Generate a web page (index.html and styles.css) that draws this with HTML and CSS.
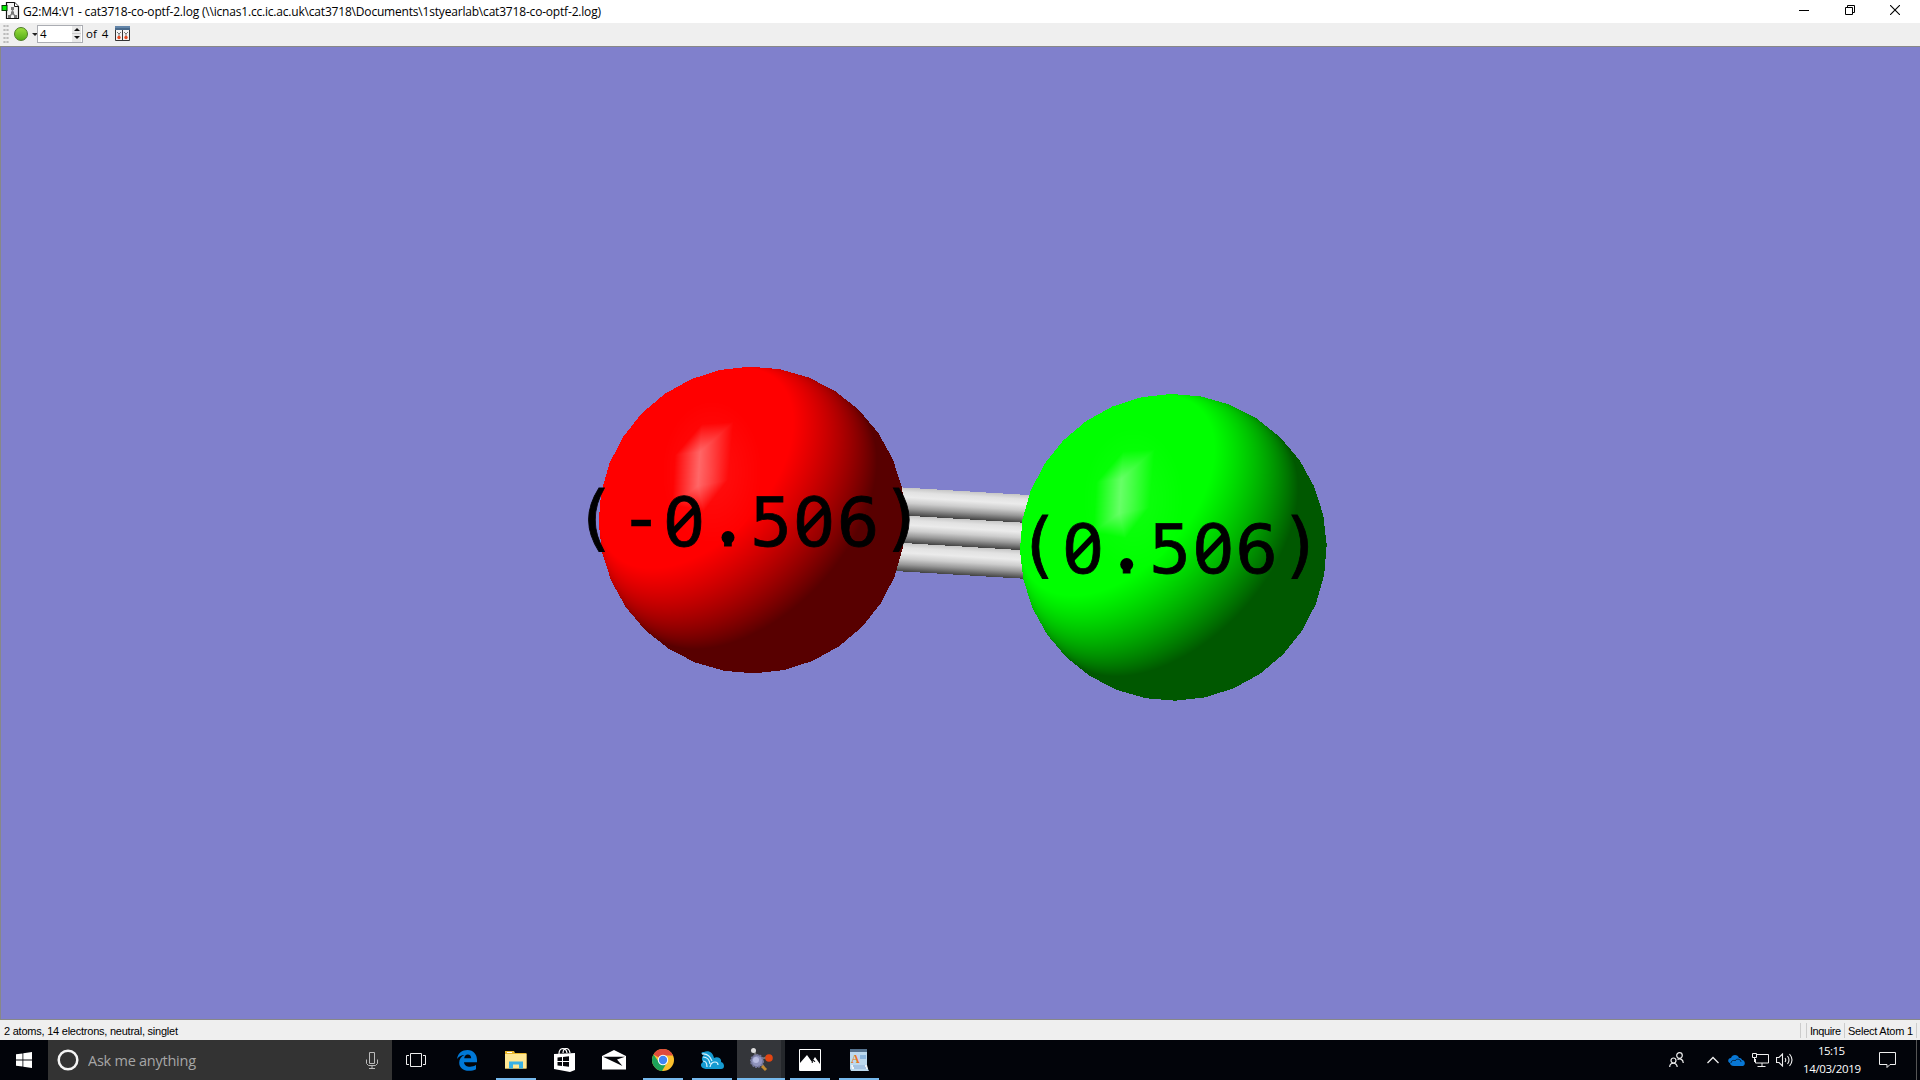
FILE: index.html
```html
<!DOCTYPE html>
<html lang="en">
<head>
<meta charset="utf-8">
<title>G2:M4:V1 - cat3718-co-optf-2.log</title>
<link rel="stylesheet" href="styles.css">
</head>
<body>
<header class="titlebar">
  <svg class="app-icon" width="20" height="20" viewBox="0 0 20 20"><path d="M5.500 1.500h8l4 4v12h-12z" fill="#f4f4f4" stroke="#111" stroke-width="1.200"/><path d="M13.500 1.500v4h4" fill="#fff" stroke="#111"/><path d="M11.500 7v5l-3 3.500m3-3.500l3 3.500" stroke="#888" stroke-width="1.500" fill="none"/><g fill="#777"><rect x="10" y="6" width="3" height="3"/><rect x="10" y="10.500" width="3" height="3"/><rect x="7" y="14" width="3" height="3"/><rect x="13" y="14" width="3" height="3"/></g><rect x="1" y="4.500" width="5" height="5" fill="#0e0" stroke="#043b04"/></svg>
  <svg class="title-text" width="600" height="23"><text x="0" y="16" textLength="578">G2:M4:V1 - cat3718-co-optf-2.log (\\icnas1.cc.ic.ac.uk\cat3718\Documents\1styearlab\cat3718-co-optf-2.log)</text></svg>
  <div class="window-buttons">
    <svg width="10" height="10"><path d="M0 5.500h10" stroke="#000"/></svg>
    <svg width="10" height="10"><path d="M.5 2.500h7v7h-7zM2.500 2V.5h7v7H8" fill="none" stroke="#000"/></svg>
    <svg width="10" height="10"><path d="M0 0l10 10M10 0L0 10" stroke="#000" stroke-width="1.100"/></svg>
  </div>
</header>
<div class="toolbar">
  <span class="grip"></span>
  <span class="ball"></span>
  <span class="drop"></span>
  <div class="spin"><span>4</span><div class="spin-buttons"><i class="up"></i><i class="down"></i></div></div>
  <span class="of">of</span><span class="total">4</span>
  <svg width="15" height="15"><path d="M.5.500h14v14H.5z" fill="#f3f3f3" stroke="#333"/><path d="M0 0h15v4H0z" fill="#49698b"/><path d="M0 1h15" stroke="#7fa3c8"/><path d="M7.500 4v11" stroke="#333"/><path d="M2 6l2 2 2-2M9 6l2 2 2-2M4 8v3m7-3v3" stroke="#777" fill="none"/><circle cx="4" cy="11.500" r="1.700" fill="#e64b22"/><circle cx="11" cy="11.500" r="1.700" fill="#e64b22"/></svg>
</div>
<main class="scene">
  <svg class="layer" width="1919" height="972" viewBox="1 47 1919 972">
    <defs><linearGradient id="bond" x1="0" y1="0" x2="0" y2="1"><stop offset="0" stop-color="#c6c6c6"/><stop offset=".16" stop-color="#e2e2e2"/><stop offset=".34" stop-color="#ebebeb"/><stop offset=".55" stop-color="#cdcdcd"/><stop offset=".75" stop-color="#999"/><stop offset="1" stop-color="#444"/></linearGradient></defs>
    <g transform="translate(890 486.700) skewY(3.450)" shape-rendering="crispEdges"><rect width="145" height="28" fill="url(#bond)"/><rect y="28" width="145" height="27.500" fill="url(#bond)"/><rect y="55.500" width="145" height="28.500" fill="url(#bond)"/></g>
  </svg>
  <canvas class="layer" id="atoms" width="1919" height="972"></canvas>
  <svg class="layer charges" width="1919" height="972" viewBox="1 47 1919 972">
    <text class="paren" x="595" y="542">(</text>
    <text class="minus" x="641" y="544">-</text>
    <text x="684 728 771 814 857.700" y="545.500">0.506</text>
    <text class="paren" x="902.500" y="542">)</text>
    <text class="paren" x="1038.500" y="569">(</text>
    <text x="1083 1126.700 1170 1213.300 1256.300" y="572.500">0.506</text>
    <text class="paren" x="1301" y="569">)</text>
    <g class="slash">
      <line x1="672" y1="533" x2="696" y2="508"/>
      <line x1="802" y1="533" x2="826" y2="508"/>
      <line x1="1071" y1="560" x2="1095" y2="535"/>
      <line x1="1201" y1="560" x2="1225" y2="535"/>
    </g>
    <g class="point"><circle cx="728" cy="537.500" r="6.500"/><circle cx="1126.700" cy="564.500" r="6.500"/></g>
  </svg>
</main>
<footer class="status">
  <svg width="190" height="20"><text x="0" y="15" textLength="174">2 atoms, 14 electrons, neutral, singlet</text></svg>
  <div class="status-cells"><span class="cell empty"></span><span class="cell"><svg width="37" height="20"><text x="3" y="15" textLength="31">Inquire</text></svg></span><span class="cell"><svg width="71" height="20"><text x="3" y="15" textLength="65">Select Atom 1</text></svg></span><span class="cell end"></span></div>
</footer>
<nav class="taskbar">
  <div class="start"><svg width="16" height="16"><path d="M0 2.300l6.500-.9v6.200H0zM7.300 1.300L16 0v7.600H7.300zM0 8.400h6.500v6.200L0 13.700zM7.300 8.400H16V16l-8.700-1.300z" fill="#fff"/></svg></div>
  <div class="search">
    <svg width="22" height="22"><circle cx="11" cy="11" r="9.300" fill="none" stroke="#f4f4f4" stroke-width="2.500"/></svg>
    <svg class="hint" width="120" height="40"><text x="0" y="25.500" textLength="108">Ask me anything</text></svg>
    <svg class="mic" width="12" height="17"><path d="M3.500.500h5v11h-5zM.5 7.500v4l2 2h7l2-2v-4M6 13.500v3M3 16.500h6" fill="none" stroke="#bbb"/></svg>
  </div>
  <div class="apps">
    <div class="app tasks"><svg width="20" height="14"><path d="M4.500.500h11v13h-11zM3 2.500H.5v9H3M17 2.500h2.500v9H17" fill="none" stroke="#eee"/></svg></div>
    <div class="app"><svg width="22" height="22"><path d="M1 10C2 4 6 1 11.500 1 17.500 1 21 5.500 21 11v2.200H8c.2 3.200 3 4.500 6 4.500 2.300 0 4.300-.7 6-1.700v4.200c-2 1.100-4.200 1.600-7 1.600C7 21.800 3.200 18.300 3.200 13.700c0-3.500 2-6.200 5.300-7.700C5.500 6.100 3 7.500 1 10zm7.200-.7h7c0-2.500-1.300-3.900-3.400-3.900-2 0-3.300 1.500-3.600 3.900z" fill="#0078d7"/></svg></div>
    <div class="app open"><svg width="22" height="18"><path d="M0 0h9l1 2h11.500v15.500H0z" fill="#e8b62c"/><path d="M0 3h21.500v14.500H0z" fill="#ffe793"/><path d="M2 1h5v1H2z" fill="#fff"/><path d="M4 10.500h14v7h-4v-4H8v4H4z" fill="#38b1e5"/></svg></div>
    <div class="app"><svg width="22" height="24"><path d="M0 6l21-1v17l-5 2L0 21z" fill="#fff"/><path d="M5 6C5-1 12-1 13 5M9 5c0-6 6-6 7 0" fill="none" stroke="#fff" stroke-width="1.200"/><path d="M3.500 9.500l4.500-.5v4H3.500zM9 8.900l6-.6V13H9zM3.500 14H8v4l-4.500-.4zM9 14h6v4.700L9 18.100z" fill="#05060a"/></svg></div>
    <div class="app"><svg width="24" height="20"><path d="M0 6L12 0l12 6v13.500H0z" fill="#fff"/><path d="M1 6.700L20.500 16 15 9.500 23 6.700z" fill="#05060a"/></svg></div>
    <div class="app open"><svg width="22" height="22" viewBox="-11 -11 22 22"><circle r="11" fill="#fbc02d"/><path d="M0 0L-9.500-5.500A11 11 0 0 1 10-4.600H0z" fill="#de4b3d"/><path d="M-9.500-5.500A11 11 0 0 0-1 11L4 2.500 0 0-4 2.300z" fill="#1da25a"/><circle r="5.200" fill="#fff"/><circle r="4.200" fill="#4285f4"/></svg></div>
    <div class="app open"><svg width="24" height="19"><path d="M4 17.500C1 17-.5 13 3 11 1 8 2 5 4 4 0 3 1 1 4 1 9-1 13 2 14 7c4-2 8 1 7 4 4 1 4 7 0 7H8c-2 0-3 0-4-.5z" fill="#159bd2"/><path d="M2 3q7-1 10 7M3 6q6 0 7 7M3 10q4 0 4 6M10 16q1-5 5-5 3 0 3 3" fill="none" stroke="#d9f4ff" stroke-width="1.200"/></svg></div>
    <div class="app open active"><svg width="24" height="24"><path d="M5 3l4 9 10-3M10 12l5 7" stroke="#777" stroke-width="2" fill="none"/><circle cx="8" cy="13" r="6" fill="#9094bd" stroke="#73769b" stroke-width="2" stroke-dasharray="2 1"/><circle cx="7" cy="12" r="3" fill="#b8bce0"/><circle cx="4.500" cy="2.500" r="2.500" fill="#ddd"/><circle cx="20" cy="10" r="3.800" fill="#e34512"/><path d="M13 18l4 4" stroke="#c18b31" stroke-width="3"/></svg></div>
    <div class="app open"><svg width="22" height="22"><path d="M.5.500h21v21H.5z" fill="#05060a" stroke="#fff"/><path d="M1 14L8 6l5 7 3-5 5 7v6.500H1z" fill="#fff"/><path d="M13 14l1.500-3 1.500 2" stroke="#05060a" fill="none"/></svg></div>
    <div class="app open"><svg width="20" height="22"><path d="M1 0h17v18l2 4H2L1 20z" fill="#bcd9ee"/><path d="M1 0h17v3H1z" fill="#55728e"/><path d="M2 16h16l1 4H3z" fill="#f1f5f8"/><path d="M11 7h6M11 9h6M4 17h12M5 19h12" stroke="#5a92cc"/><text class="doc-letter" x="2" y="14">A</text></svg></div>
  </div>
  <div class="tray">
    <svg class="people" width="15" height="16"><g fill="none" stroke="#eee" stroke-width="1.200"><circle cx="10.500" cy="3.500" r="2.800"/><circle cx="4.500" cy="8.500" r="2.500"/><path d="M.7 15c0-5 7.500-5 7.500 0M8.500 7.500c3-1.500 5.500 0 5.800 3.500"/></g></svg>
    <svg class="chevron" width="12" height="8"><path d="M.5 7L6 1.500 11.500 7" fill="none" stroke="#eee" stroke-width="1.300"/></svg>
    <svg class="cloud" width="17" height="11"><path d="M2 8C-1 7 0 3 3 3c1-4 7-4 8 0 3 0 3 2 3 2 3 0 4 5 1 6H6C3 11 2 9.500 2 8z" fill="#0877d5"/><path d="M3 8c0-3 4-3 4-2 1-3 6-2 6 1" fill="none" stroke="#05060a" stroke-width=".7"/></svg>
    <svg class="net" width="17" height="14"><path d="M5 1.500h11.500v8.500H3.500V6M10 10v3.500M5.500 13.500h8M.5.500h4v4h-4zM2.500 5v4" fill="none" stroke="#eee"/></svg>
    <svg class="sound" width="17" height="14"><path d="M.5 4.500H3l3.500-3.500v12L3 9.500H.5zM9 5q1.500 2 0 4M11.500 3q3 4 0 8M13.500 1q5 6 0 12" fill="none" stroke="#eee" stroke-width="1.100"/></svg>
    <svg class="clock" width="60" height="40"><text x="16" y="15" textLength="27">15:15</text><text x="1" y="33" textLength="58">14/03/2019</text></svg>
    <svg class="notice" width="17" height="16"><path d="M.5.500h16v12H11L8 15.500V12.500H.5z" fill="none" stroke="#eee"/></svg>
  </div>
</nav>
<script src="atoms.js"></script>
</body>
</html>
```
FILE: styles.css
```css
* { box-sizing: border-box; }
body { margin: 0; width: 1920px; height: 1080px; overflow: hidden; display: flex; flex-direction: column; background: #efefef; font: 12px "Open Sans", "Noto Sans", sans-serif; color: #000; }
svg { display: block; flex: none; }
.titlebar { height: 23px; background: #fff; display: flex; align-items: flex-start; flex: none; }
.app-icon { margin: 1px 2px 0 1px; }
.title-text { font-size: 12px; }
.window-buttons { margin-left: auto; display: flex; gap: 35px; padding: 5px 20px 0 0; }
.window-buttons svg:first-child { margin-right: 1px; }
.toolbar { height: 23px; flex: none; background: #efefef; display: flex; align-items: center; padding: 0 0 2px 3px; }
.grip { width: 6px; height: 20px; background: radial-gradient(circle, #bbb 1px, transparent 1.3px) 0 0 / 3px 4px; }
.ball { width: 14px; height: 14px; margin-left: 5px; border-radius: 50%; background: linear-gradient(#9ade3e, #55ad18); border: 1px solid #4c7c24; }
.drop { border: 3px solid transparent; border-top-color: #222; border-bottom: 0; margin: 1px 0 0 4px; }
.spin { width: 46px; height: 18px; margin-left: -1px; border: 1px solid #abadb3; background: #fff; display: flex; justify-content: space-between; align-items: center; padding: 0 1px 0 2px; font-size: 11.500px; }
.spin-buttons { width: 9px; height: 16px; display: grid; grid-template-rows: 1fr 1fr; gap: 1px; background: #ccc; }
.spin-buttons i { background: #e9e9e9; display: grid; place-items: center; }
.spin-buttons i::after { content: ""; border: 3px solid transparent; }
.up::after { border-bottom-color: #111 !important; border-top: 0 !important; }
.down::after { border-top-color: #111 !important; border-bottom: 0 !important; }
.of { margin-left: 3px; font-size: 11.500px; }
.total { margin: 0 7px 0 5px; font-size: 11.500px; }
.scene { height: 974px; flex: none; position: relative; background: #8080cc; border: 1px solid #888; border-right: 0; }
.layer { position: absolute; inset: 0; }
.charges { font: 67px "DejaVu Sans", sans-serif; fill: #000; stroke: #000; stroke-width: .8; text-anchor: middle; filter: blur(.5px); }
.paren { font: 71px "DejaVu Sans Mono", monospace; }
.minus { font-size: 74px; stroke-width: .3; }
.slash { stroke: #000; stroke-width: 6px; }
.point { stroke: none; }
.status { height: 20px; flex: none; display: flex; justify-content: space-between; padding-left: 4px; font: 11px "Liberation Sans", Arial, sans-serif; }
.status-cells { display: flex; }
.cell { height: 15px; margin-top: 3px; border-left: 1px solid #ccc; }
.cell svg { margin-top: -3px; }
.empty { width: 6px; }
.end { width: 4px; }
.taskbar { height: 40px; flex: none; background: #02040a; display: flex; color: #fff; }
.start { width: 48px; display: grid; place-items: center; }
.search { width: 344px; background: #333; display: flex; align-items: center; padding-left: 9px; }
.hint { margin-left: 9px; font-size: 14.500px; fill: #a6a6a6; }
.mic { margin: 0 14px 0 auto; }
.apps { display: flex; gap: 5px; padding-left: 2px; }
.app { width: 44px; height: 40px; display: grid; place-items: center; }
.tasks { margin-right: 2px; }
.open { background: linear-gradient(#76b9ed, #76b9ed) 2px 38px / 40px 2px no-repeat; }
.active { width: 48px; margin: 0 -2px; background: linear-gradient(#76b9ed, #76b9ed) 0 38px / 48px 2px no-repeat, linear-gradient(90deg, #34363a 44px, #25282c 44px); }
.doc-letter { font: bold 12px "Liberation Serif", serif; fill: #e87722; }
.tray { margin-left: auto; display: flex; align-items: center; padding-right: 4px; border-right: 1px solid #555; margin-right: 3px; }
.chevron { margin-left: 23px; }
.cloud { margin-left: 9px; }
.net { margin-left: 7px; }
.sound { margin-left: 7px; }
.clock { margin-left: 9px; font-size: 11.500px; fill: #fff; }
.notice { margin: 0 16px 0 17px; }
```
FILE: atoms.js
```js
// Shaded 32-sided spheres lit from the upper left.
const canvas = document.getElementById('atoms');
const ctx = canvas.getContext('2d');
const OX = 1, OY = 47;
const L = [-0.58, -0.54, 0.61];
const rim = [[-50, -96], [-18.500, -98], [-24, -40], [-48, -9], [-80, -15], [-77, -65]];
const ridgeTop = [-52, -68], ridgeLow = [-54, -34];
const faces = [
  [ridgeTop, rim[0], rim[1]], [ridgeTop, rim[1], rim[2]],
  [ridgeTop, rim[5], rim[0]], [ridgeTop, rim[2], ridgeLow],
  [ridgeLow, rim[2], rim[3]], [ridgeLow, rim[3], rim[4]],
  [ridgeLow, rim[4], rim[5]], [ridgeTop, ridgeLow, rim[5]]
];
function shine(x, y) {
  for (const [a, b, c] of faces) {
    const d = (b[1] - c[1]) * (a[0] - c[0]) + (c[0] - b[0]) * (a[1] - c[1]);
    const u = ((b[1] - c[1]) * (x - c[0]) + (c[0] - b[0]) * (y - c[1])) / d;
    const v = ((c[1] - a[1]) * (x - c[0]) + (a[0] - c[0]) * (y - c[1])) / d;
    const w = 1 - u - v;
    if (u >= 0 && v >= 0 && w >= 0) {
      return [u, v, w].reduce((s, k, i) => s + ([a, b, c][i] === ridgeTop || [a, b, c][i] === ridgeLow ? k : 0), 0);
    }
  }
  return 0;
}
function sphere(cx, cy, channel) {
  const R = 153.4, S = 320, half = S / 2;
  const left = Math.round(cx - half), top = Math.round(cy - half);
  const img = ctx.createImageData(S, S);
  const out = document.createElement('canvas');
  out.width = out.height = S;
  const step = Math.PI / 16, start = -Math.PI / 2 - 0.015;
  for (let j = 0; j < S; j++) for (let i = 0; i < S; i++) {
    const x = left + i + .5 - cx, y = top + j + .5 - cy, r = Math.hypot(x, y);
    let t = (Math.atan2(y, x) - start) % step;
    if (t < 0) t += step;
    if (r > R * Math.cos(step / 2) / Math.cos(t - step / 2)) continue;
    const nx = x / R, ny = y / R, nz = Math.sqrt(Math.max(0, 1 - nx * nx - ny * ny));
    const diffuse = Math.max(0, nx * L[0] + ny * L[1] + nz * L[2]);
    const s = shine(x, y) * 92 + Math.max(0, 1 - Math.hypot(x + 40, (y + 48) * .7) / 50) * 16;
    const p = (j * S + i) * 4;
    img.data[p] = img.data[p + 1] = img.data[p + 2] = s;
    img.data[p + channel] = Math.min(255, 88 + 265 * diffuse + s);
    img.data[p + 3] = 255;
  }
  out.getContext('2d').putImageData(img, 0, 0);
  ctx.drawImage(out, left - OX, top - OY);
}
sphere(752, 520, 0);
sphere(1173.3, 547.3, 1);
```
